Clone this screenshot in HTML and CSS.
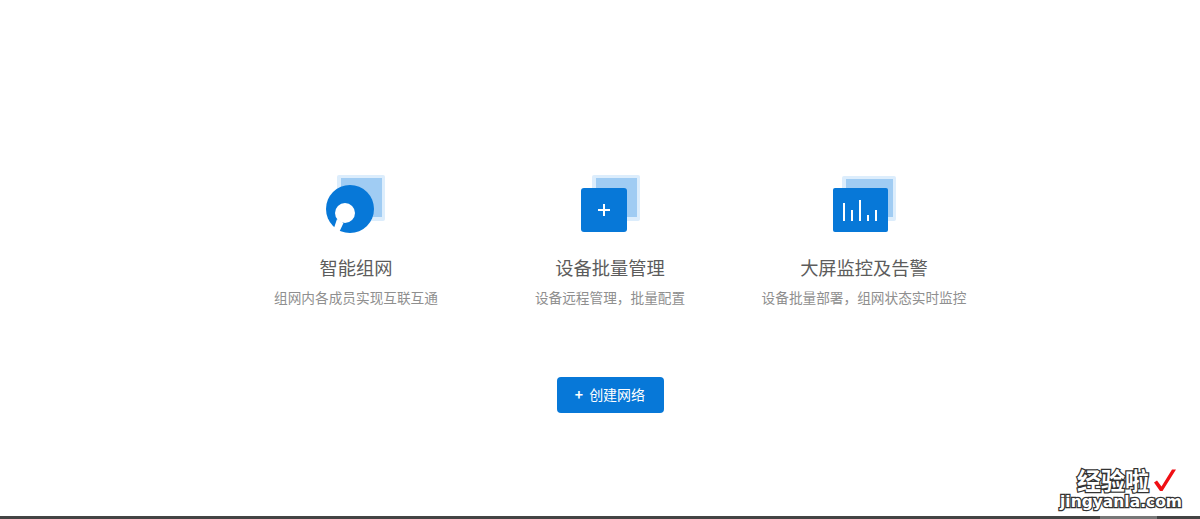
FILE: index.html
```html
<!DOCTYPE html>
<html lang="zh-CN">
<head>
<meta charset="utf-8">
<title>创建网络</title>
<link rel="stylesheet" href="styles.css">
</head>
<body>
<main class="page">
  <section class="features">
    <article class="feature">
      <svg class="icon" width="80" height="60" viewBox="0 0 80 60">
        <rect class="back-o" x="21" y="0" width="48" height="46" rx="2"/>
        <rect class="back-i" x="25" y="3" width="41" height="39"/>
        <circle class="front" cx="34" cy="34" r="24"/>
        <circle class="cut" cx="29" cy="38" r="10"/>
        <path class="cut" d="M21 44l6.500 4L23 57.500 18 53z"/>
      </svg>
      <h2 class="title">智能组网</h2>
      <p class="desc">组网内各成员实现互联互通</p>
    </article>
    <article class="feature">
      <svg class="icon" width="80" height="60" viewBox="0 0 80 60">
        <rect class="back-o" x="22" y="0" width="48" height="46" rx="2"/>
        <rect class="back-i" x="26" y="3" width="41" height="39"/>
        <rect class="front" x="11" y="13" width="46" height="44" rx="3"/>
        <path class="glyph" d="M28 35h12M34 29v12"/>
      </svg>
      <h2 class="title">设备批量管理</h2>
      <p class="desc">设备远程管理，批量配置</p>
    </article>
    <article class="feature">
      <svg class="icon" width="80" height="60" viewBox="0 0 80 60">
        <rect class="back-o" x="18" y="1" width="54" height="45" rx="2"/>
        <rect class="back-i" x="22" y="4" width="47" height="38"/>
        <rect class="front" x="9" y="13" width="55" height="44" rx="2"/>
        <path class="glyph" d="M20 28v18M28 35v11M36 25v21M44 40v6M52 35v11"/>
      </svg>
      <h2 class="title">大屏监控及告警</h2>
      <p class="desc">设备批量部署，组网状态实时监控</p>
    </article>
  </section>
  <button class="create" type="button"><span class="plus">+</span>创建网络</button>
</main>
<footer class="bar"><span class="bar-seg"></span></footer>
<aside class="mark">
  <div class="mark-row"><span class="mark-cn">经验啦</span><svg class="tick" width="24" height="24" viewBox="0 0 24 24"><path d="M1 14.500l3-2 4.500 6L19 1.500h4L9.500 23H7z"/></svg></div>
  <div class="mark-en">jingyanla.com</div>
</aside>
</body>
</html>
```
FILE: styles.css
```css
* { box-sizing: border-box; }
html, body { margin: 0; height: 100%; }
body {
  display: flex;
  flex-direction: column;
  position: relative;
  overflow: hidden;
  background: #fff;
  font-family: "Noto Sans CJK SC", "Noto Sans", sans-serif;
}
.page {
  flex: 1;
  display: flex;
  flex-direction: column;
  align-items: center;
  padding: 175px 0 0 20px;
}
.features { display: flex; }
.feature {
  width: 254px;
  display: flex;
  flex-direction: column;
  align-items: center;
}
.icon { display: block; height: 60px; }
.back-o { fill: #dcedfc; }
.back-i { fill: #a0ccf3; }
.front { fill: #0778d8; }
.cut { fill: #fff; }
.glyph { fill: none; stroke: #fff; stroke-width: 2; }
.title {
  margin: 20px 0 0;
  font-size: 18.250px;
  line-height: 24px;
  font-weight: 400;
  color: #5c5c5c;
}
.desc {
  margin: 8px 0 0;
  font-size: 13.670px;
  line-height: 20px;
  color: #8f8f8f;
  white-space: nowrap;
}
.create {
  margin-top: 70px;
  width: 107px;
  height: 36px;
  padding: 0 0 2px;
  display: flex;
  align-items: center;
  justify-content: center;
  border: 0;
  border-radius: 4px;
  background: #0778d8;
  color: #fff;
  font: 400 14px/20px "Noto Sans CJK SC", "Noto Sans", sans-serif;
}
.plus { margin-right: 6px; font-weight: 700; }
.bar {
  height: 3px;
  flex: none;
  position: relative;
  background: #444;
}
.bar-seg {
  position: absolute;
  left: 1100px;
  top: 0;
  width: 57px;
  height: 100%;
  background: #777;
}
.mark {
  position: absolute;
  left: 1060px;
  top: 467px;
  width: 126px;
  color: #fff;
  font-weight: 700;
  -webkit-text-stroke: 2.500px #333;
  paint-order: stroke fill;
}
.mark-row { display: flex; align-items: center; padding-left: 17px; gap: 4px; height: 26px; }
.mark-cn { font-size: 24px; line-height: 26px; }
.tick { fill: #f00f14; flex: none; }
.mark-en { font: 700 15.500px/19px "DejaVu Sans", sans-serif; white-space: nowrap; }
```
